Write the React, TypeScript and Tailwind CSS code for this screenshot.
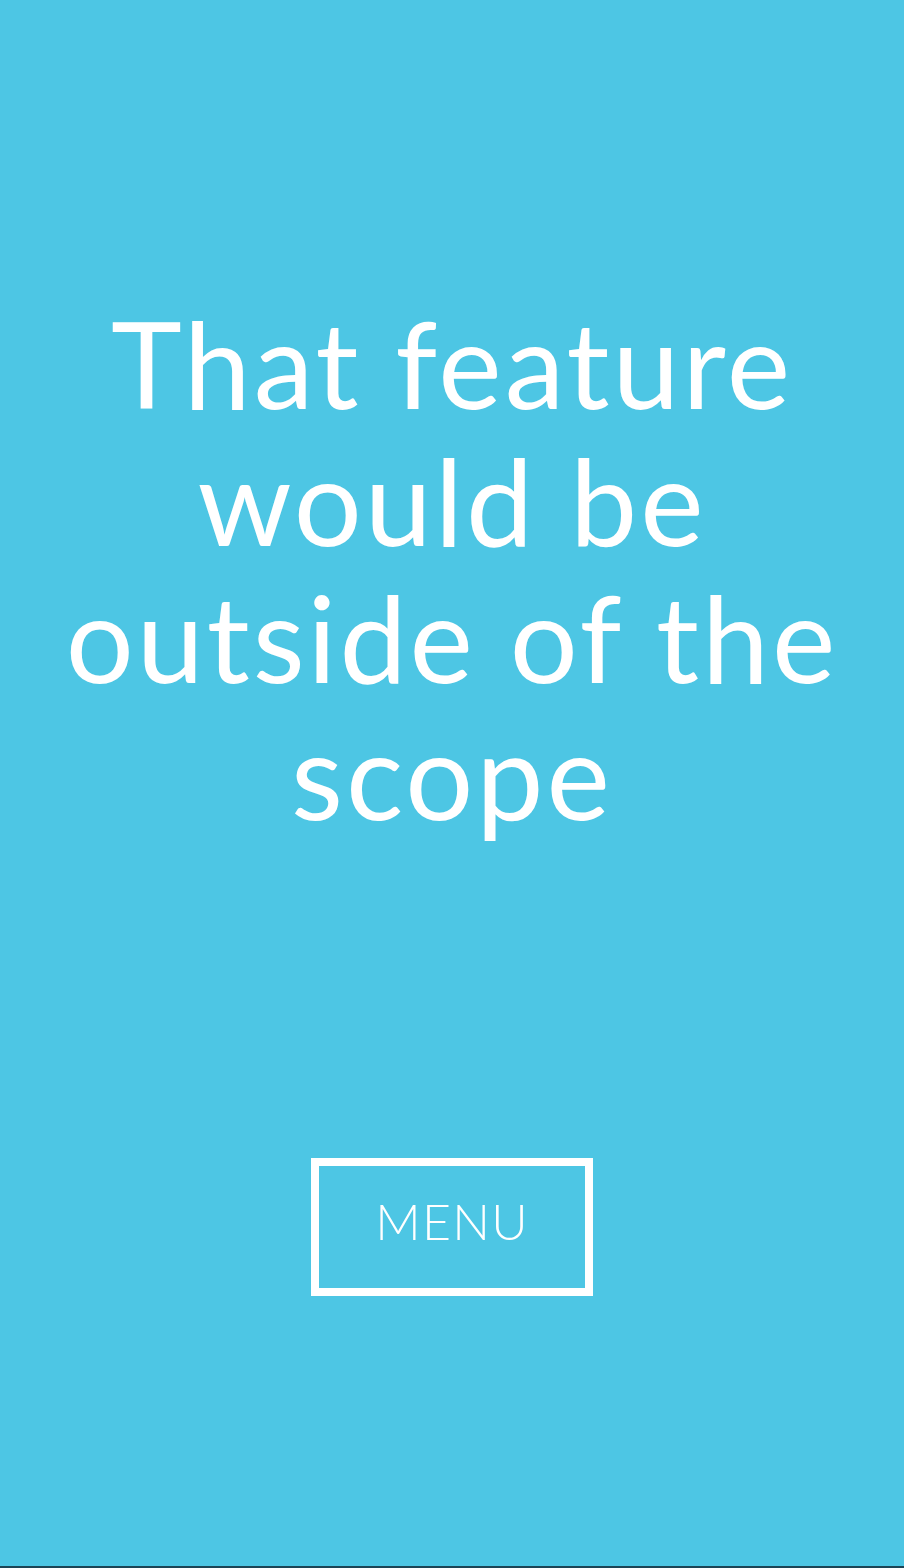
export default function App() {
  return (
    <div className="flex h-[1568px] w-full flex-col bg-[#4dc6e4] font-['Lato',sans-serif] text-white">
      {/* Headline */}
      <div className="pt-[295px]">
        <h1 className="text-center text-[120px] leading-[137px] font-normal tracking-[3px]">
          That feature
          <br />
          would be
          <br />
          outside of the
          <br />
          scope
        </h1>
      </div>

      {/* Menu button */}
      <div className="mt-auto flex justify-center pb-[270px]">
        <button className="flex h-[138px] w-[282px] items-center justify-center border-[8px] border-white pb-[12px] text-[50px] font-light tracking-wide">
          MENU
        </button>
      </div>

      <div className="h-[2px] bg-[#1b4556]" />
    </div>
  )
}
